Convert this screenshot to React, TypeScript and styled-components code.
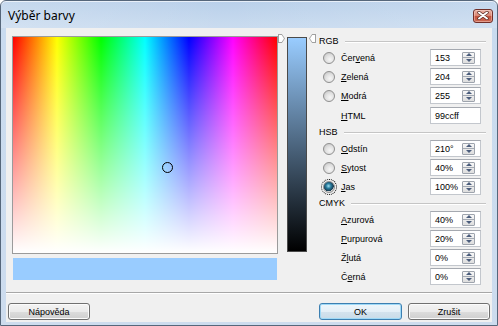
import React from "react"
import styled, { createGlobalStyle, css } from "styled-components"

const GlobalStyle = createGlobalStyle`
  html, body {
    margin: 0;
    padding: 0;
    background: #ffffff;
  }
  body {
    width: 498px;
    height: 326px;
    overflow: hidden;
    font-family: "Liberation Sans", Arial, sans-serif;
  }
`

const current = { hue: 210, sat: 40, bri: 100, hex: "#99ccff" }

const FIELD_W = 264
const FIELD_H = 216
const BAR_H = 213

interface Entry {
  label: React.ReactNode
  value: string
  radio?: boolean
  checked?: boolean
  spin?: boolean
}

interface Group {
  title: string
  rows: Entry[]
}

// built lazily: the styled components below don't exist yet at module load
function buildGroups(): Group[] {
  const u = (s: string) => <U>{s}</U>
  return [
    {
      title: "RGB",
      rows: [
        { label: <>Čer{u("v")}ená</>, value: "153", radio: true, spin: true },
        { label: <>{u("Z")}elená</>, value: "204", radio: true, spin: true },
        { label: <>{u("M")}odrá</>, value: "255", radio: true, spin: true },
        { label: <>{u("H")}TML</>, value: "99ccff" }
      ]
    },
    {
      title: "HSB",
      rows: [
        { label: <>{u("O")}dstín</>, value: "210°", radio: true, spin: true },
        { label: <>{u("S")}ytost</>, value: "40%", radio: true, spin: true },
        { label: <>{u("J")}as</>, value: "100%", radio: true, checked: true, spin: true }
      ]
    },
    {
      title: "CMYK",
      rows: [
        { label: <>{u("A")}zurová</>, value: "40%", spin: true },
        { label: <>{u("P")}urpurová</>, value: "20%", spin: true },
        { label: <>Ž{u("l")}utá</>, value: "0%", spin: true },
        { label: <>Č{u("e")}rná</>, value: "0%", spin: true }
      ]
    }
  ]
}

export default function App() {
  const groups = buildGroups()
  const cursorLeft = (current.hue / 360) * FIELD_W
  const cursorTop = (1 - current.sat / 100) * FIELD_H
  const markerTop = (1 - current.bri / 100) * BAR_H

  return (
    <>
      <GlobalStyle />
      <Window>
        <TitleBar>
          <Title>Výběr barvy</Title>
          <CloseButton>
            <svg width="12" height="9" viewBox="0 0 12 9">
              <path d="M2 1.5 L10 7.5 M10 1.5 L2 7.5" stroke="#5a2a22" strokeWidth="3.4" strokeLinecap="round" />
              <path d="M2 1.5 L10 7.5 M10 1.5 L2 7.5" stroke="#ffffff" strokeWidth="2" strokeLinecap="round" />
            </svg>
          </CloseButton>
        </TitleBar>

        <Client>
          <Main>
            <LeftColumn>
              <Spectrum>
                <Cursor style={{ left: cursorLeft, top: cursorTop }} />
              </Spectrum>
              <Preview $color={current.hex} />
            </LeftColumn>

            <BrightnessColumn>
              <BrightnessBar $color={current.hex} />
              <Marker $side="left" style={{ top: markerTop }} />
              <Marker $side="right" style={{ top: markerTop }} />
            </BrightnessColumn>

            <Panel>
              {groups.map(group => (
                <React.Fragment key={group.title}>
                  <GroupHeader>
                    <span>{group.title}</span>
                    <GroupLine />
                  </GroupHeader>
                  {group.rows.map((row, i) => (
                    <Row key={i} $gap={row.spin ? 0 : 1}>
                      <RadioSlot>
                        {row.radio && <Radio $checked={row.checked} />}
                      </RadioSlot>
                      <Label>{row.label}</Label>
                      <Field>
                        <span>{row.value}</span>
                        {row.spin && (
                          <Spin>
                            <Arrow $dir="up" />
                            <Arrow $dir="down" />
                          </Spin>
                        )}
                      </Field>
                    </Row>
                  ))}
                </React.Fragment>
              ))}
            </Panel>
          </Main>

          <Footer>
            <Button $width={82}>Nápověda</Button>
            <Spacer />
            <Button $width={83} $default>OK</Button>
            <Button $width={82}>Zrušit</Button>
          </Footer>
        </Client>
      </Window>
    </>
  )
}

const Window = styled.div`
  width: 498px;
  height: 326px;
  box-sizing: border-box;
  display: flex;
  flex-direction: column;
  padding: 0 5px 3px;
  border: 1px solid #56677b;
  border-radius: 6px 6px 0 0;
  background: linear-gradient(to bottom, #b9d0ea 0, #c9dbef 26px, #cddcee 100%);
  box-shadow: inset 0 1px 0 #e6eef8;
`

const TitleBar = styled.div`
  height: 27px;
  flex: none;
  display: flex;
  align-items: center;
  justify-content: space-between;
  margin: 0 -5px;
  padding: 0 4px 0 7px;
  background: linear-gradient(to right, rgba(255, 255, 255, 0.18), rgba(255, 255, 255, 0) 45%, rgba(255, 255, 255, 0.15));
`

const Title = styled.div`
  font-family: "Noto Sans", "Liberation Sans", sans-serif;
  font-size: 12px;
  color: #000000;
  margin-top: 1px;
`

const CloseButton = styled.div`
  width: 20px;
  height: 14px;
  box-sizing: border-box;
  margin-top: 2px;
  display: flex;
  align-items: center;
  justify-content: center;
  border: 1px solid #71302a;
  border-radius: 3px;
  background: linear-gradient(to bottom, #e9b3a6 0%, #d98572 48%, #c4533d 52%, #cc6a55 100%);
  box-shadow: inset 0 0 0 1px rgba(255, 220, 210, 0.45);
`

const Client = styled.div`
  flex: 1;
  display: flex;
  flex-direction: column;
  background: #f0f0f0;
`

const Main = styled.div`
  height: 264px;
  box-sizing: border-box;
  display: flex;
  align-items: flex-start;
  padding: 6px 0 0 6px;
`

const LeftColumn = styled.div`
  display: flex;
  flex-direction: column;
  margin-top: 2px;
`

const Spectrum = styled.div`
  position: relative;
  width: ${FIELD_W}px;
  height: ${FIELD_H}px;
  border: 1px solid #9b9b9b;
  background:
    linear-gradient(to bottom, rgba(255, 255, 255, 0), #ffffff),
    linear-gradient(to right, #ff0000, #ffff00, #00ff00, #00ffff, #0000ff, #ff00ff, #ff0000);
`

const Cursor = styled.div`
  position: absolute;
  width: 11px;
  height: 11px;
  box-sizing: border-box;
  margin: -5px 0 0 -5px;
  border: 1px solid #000000;
  border-radius: 50%;
`

const Preview = styled.div<{ $color: string }>`
  height: 22px;
  margin: 4px 1px 0;
  background: ${p => p.$color};
`

const BrightnessColumn = styled.div`
  position: relative;
  padding: 3px 9px 0 9px;
`

const BrightnessBar = styled.div<{ $color: string }>`
  width: 20px;
  height: ${BAR_H + 2}px;
  box-sizing: border-box;
  border: 1px solid #4a4a4a;
  background: linear-gradient(to bottom, ${p => p.$color}, #000000);
`

const Marker = styled.div<{ $side: "left" | "right" }>`
  position: absolute;
  width: 7px;
  height: 9px;
  background: #a0a0a0;
  ${p =>
    p.$side === "left"
      ? css`
          left: 0;
          clip-path: polygon(0 0, 55% 0, 100% 50%, 55% 100%, 0 100%);
        `
      : css`
          right: 0;
          clip-path: polygon(45% 0, 100% 0, 100% 100%, 45% 100%, 0 50%);
        `}

  &::after {
    content: "";
    position: absolute;
    inset: 1px;
    background: #ffffff;
    clip-path: inherit;
  }
`

const Panel = styled.div`
  width: 167px;
  margin-left: 3px;
  display: flex;
  flex-direction: column;
  font-size: 9px;
  color: #000000;
`

const GroupHeader = styled.div`
  height: 14px;
  display: flex;
  align-items: center;
  gap: 6px;
`

const GroupLine = styled.div`
  flex: 1;
  height: 1px;
  background: #c5c5c5;
  box-shadow: 0 1px 0 #ffffff;
`

const Row = styled.div<{ $gap: number }>`
  height: 19px;
  margin-top: ${p => p.$gap}px;
  display: grid;
  grid-template-columns: 22px 1fr 51px;
  align-items: center;
  padding-right: 5px;
`

const RadioSlot = styled.div`
  display: flex;
  align-items: center;
  padding-left: 4px;
`

const Radio = styled.div<{ $checked?: boolean }>`
  width: 12px;
  height: 12px;
  box-sizing: border-box;
  border-radius: 50%;
  border: 1px solid #8f8f8f;
  background: radial-gradient(circle at 60% 65%, #f6f6f6 0, #e2e2e2 45%, #bcbcbc 100%);
  ${p =>
    p.$checked &&
    css`
      background: radial-gradient(circle at 45% 40%, #9fe0f2 0, #2a7d9e 30%, #15384f 62%, #d8d8d8 66%, #bcbcbc 100%);
      outline: 1px dotted #000000;
      outline-offset: 1px;
    `}
`

const Label = styled.div`
  white-space: nowrap;
`

const U = styled.span`
  text-decoration: underline;
`

const Field = styled.div`
  height: 17px;
  box-sizing: border-box;
  display: flex;
  align-items: center;
  padding: 0 5px 0 4px;
  background: #ffffff;
  border: 1px solid #c3c7cd;
  border-top-color: #a5a9b0;
`

const Spin = styled.div`
  margin-left: auto;
  width: 13px;
  height: 12px;
  box-sizing: border-box;
  display: flex;
  flex-direction: column;
  border: 1px solid #9ea4ad;
  border-radius: 1px;
  background: linear-gradient(to bottom, #f7f7f7, #dedede);
`

const Arrow = styled.div<{ $dir: "up" | "down" }>`
  flex: 1;
  display: flex;
  align-items: center;
  justify-content: center;
  ${p =>
    p.$dir === "down" &&
    css`
      border-top: 1px solid #a4aab3;
    `}

  &::before {
    content: "";
    width: 0;
    height: 0;
    border-left: 3px solid transparent;
    border-right: 3px solid transparent;
    ${p =>
      p.$dir === "up"
        ? css`
            border-bottom: 3px solid #4b5d7c;
          `
        : css`
            border-top: 3px solid #4b5d7c;
          `}
  }
`

const Footer = styled.div`
  flex: 1;
  display: flex;
  align-items: flex-start;
  gap: 6px;
  padding: 10px 2px 0;
  border-top: 1px solid #a7a7a7;
  box-shadow: inset 0 1px 0 #ffffff;
`

const Spacer = styled.div`
  flex: 1;
`

const Button = styled.div<{ $width: number; $default?: boolean }>`
  width: ${p => p.$width}px;
  height: 17px;
  box-sizing: border-box;
  display: flex;
  align-items: center;
  justify-content: center;
  font-size: 9px;
  color: #000000;
  border: 1px solid #707070;
  border-radius: 3px;
  background: linear-gradient(to bottom, #f3f3f3 0%, #ebebeb 50%, #dddddd 50%, #cfcfcf 100%);
  box-shadow: inset 0 0 0 1px #fbfbfb;
  ${p =>
    p.$default &&
    css`
      border-color: #3c7fb1;
      box-shadow: inset 0 0 0 1px #9fd9f7;
      background: linear-gradient(to bottom, #eef6fb 0%, #e4eff7 50%, #d4e3ee 50%, #c9dbe8 100%);
    `}
`
